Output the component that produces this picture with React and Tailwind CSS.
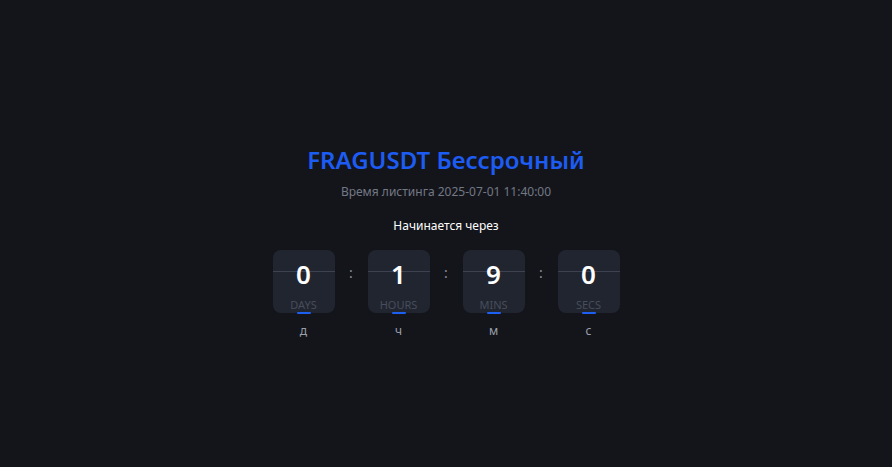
const units = [
  { value: "0", label: "DAYS", short: "д" },
  { value: "1", label: "HOURS", short: "ч" },
  { value: "9", label: "MINS", short: "м" },
  { value: "0", label: "SECS", short: "с" },
];

function FlipBox({ value, label, short }) {
  return (
    <div className="flex flex-col items-center w-[62px]">
      <div className="relative w-[62px] h-[63px] rounded-[8px] bg-[#212530] flex flex-col items-center">
        <div className="absolute left-0 right-0 top-[21px] h-px bg-[#3d4250]" />
        <span className="relative mt-[9px] text-[26px] leading-[30px] font-semibold text-white">{value}</span>
        <span className="mt-[9px] text-[11px] leading-[14px] text-[#474d5b] uppercase">{label}</span>
        <div className="absolute bottom-[-1px] w-[14px] h-[2px] rounded-full bg-[#1d5ff0]" />
      </div>
      <span className="mt-[9px] text-[12px] leading-[18px] text-[#9aa0ab]">{short}</span>
    </div>
  );
}

export default function App() {
  return (
    <main
      className="min-h-screen bg-[#14151b] flex flex-col items-center pt-[144px]"
      style={{ fontFamily: '"Noto Sans", "Open Sans", sans-serif' }}
    >
      <h1 className="text-[24px] leading-[32px] font-semibold text-[#1d5cf2]">FRAGUSDT Бессрочный</h1>
      <p className="mt-[6px] text-[12px] leading-[20px] text-[#737885]">Время листинга 2025-07-01 11:40:00</p>
      <p className="mt-[14px] text-[12px] leading-[20px] text-white">Начинается через</p>

      <div className="mt-[14px] flex items-start">
        {units.map((u, i) => (
          <div key={u.label} className="flex items-start">
            {i > 0 && (
              <span className="w-[33px] text-center text-[14px] leading-[46px] text-[#8b909c]">:</span>
            )}
            <FlipBox {...u} />
          </div>
        ))}
      </div>
    </main>
  );
}
